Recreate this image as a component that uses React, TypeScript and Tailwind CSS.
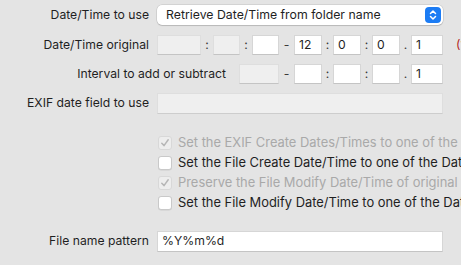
import React from "react";

const font = { fontFamily: "Inter, 'Noto Sans', sans-serif" };

function Box({ w, value, disabled }: { w: string; value?: string; disabled?: boolean }) {
  return (
    <div
      className={`${w} h-[20px] shrink-0 flex items-center px-[4px] text-[12.2px] text-[#1f1f1f] border border-[#d6d6d6] border-b-[#c4c4c4] ${
        disabled ? "bg-[#efefef] border-[#dedede]" : "bg-white"
      }`}
    >
      {value}
    </div>
  );
}

function Sep({ ch }: { ch: string }) {
  return <span className="w-[11px] shrink-0 text-center text-[12.2px] text-[#3a3a3a]">{ch}</span>;
}

function Label({ children, w = "w-[149px]" }: { children: React.ReactNode; w?: string }) {
  return (
    <div className={`${w} shrink-0 text-right text-[12.2px] text-[#1f1f1f] whitespace-nowrap`}>
      {children}
    </div>
  );
}

function Check({ checked, disabled, text }: { checked?: boolean; disabled?: boolean; text: string }) {
  return (
    <div className="h-[20px] flex items-center gap-[6px] pl-[158px] whitespace-nowrap">
      <div
        className={`w-[14px] h-[14px] shrink-0 rounded-[3px] flex items-center justify-center ${
          disabled ? "bg-[#ededed] border border-[#d8d8d8]" : "bg-white border border-[#c9c9c9] shadow-[0_0.5px_0.5px_rgba(0,0,0,0.1)]"
        }`}
      >
        {checked && (
          <svg width="10" height="10" viewBox="0 0 10 10">
            <path d="M1.8 5.2 L4 7.6 L8.2 1.8" fill="none" stroke="#b5b5b5" strokeWidth="1.5" strokeLinecap="round" strokeLinejoin="round" />
          </svg>
        )}
      </div>
      <span className={`text-[12.9px] ${disabled ? "text-[#a9a9a9]" : "text-[#1f1f1f]"}`}>{text}</span>
    </div>
  );
}

export default function App() {
  return (
    <div className="w-[461px] h-[265px] overflow-hidden bg-[#e4e4e4]" style={font}>
      {/* Date/Time to use */}
      <div className="flex items-center gap-[8px] pt-[5px] h-[25px]">
        <Label>Date/Time to use</Label>
        <div className="w-[286px] h-[20px] shrink-0 bg-white rounded-[5px] shadow-[0_0_0_0.5px_rgba(0,0,0,0.15),0_1px_1px_rgba(0,0,0,0.12)] flex items-center justify-between pl-[9px] pr-[2px]">
          <span className="text-[12.3px] text-[#1f1f1f]">Retrieve Date/Time from folder name</span>
          <div className="w-[16px] h-[16px] rounded-[4px] bg-[#1c7cf4] flex items-center justify-center">
            <svg width="10" height="12" viewBox="0 0 10 12">
              <path d="M2.5 4.5 L5 2 L7.5 4.5 M2.5 7.5 L5 10 L7.5 7.5" fill="none" stroke="white" strokeWidth="1.5" strokeLinecap="round" strokeLinejoin="round" />
            </svg>
          </div>
        </div>
      </div>

      {/* Date/Time original */}
      <div className="flex items-center mt-[10px] h-[20px]">
        <Label>Date/Time original</Label>
        <div className="flex items-center ml-[8px]">
          <Box w="w-[44px]" disabled />
          <span className="w-[12px] shrink-0 text-center text-[12.2px] text-[#3a3a3a]">:</span>
          <Box w="w-[27px]" disabled />
          <span className="w-[12px] shrink-0 text-center text-[12.2px] text-[#3a3a3a]">:</span>
          <Box w="w-[27px]" />
          <span className="w-[15px] shrink-0 text-center text-[12.2px] text-[#3a3a3a]">-</span>
          <Box w="w-[28px]" value="12" />
          <Sep ch=":" />
          <Box w="w-[28px]" value="0" />
          <Sep ch=":" />
          <Box w="w-[28px]" value="0" />
          <Sep ch="." />
          <Box w="w-[32px]" value="1" />
          <span className="ml-[13px] text-[12.2px] text-[#b3261e] whitespace-nowrap">(?)</span>
        </div>
      </div>

      {/* Interval */}
      <div className="flex items-center mt-[9px] h-[20px]">
        <Label w="w-[226px]">Interval to add or subtract</Label>
        <div className="flex items-center ml-[13px]">
          <Box w="w-[40px]" disabled />
          <span className="w-[15px] shrink-0 text-center text-[12.2px] text-[#3a3a3a]">-</span>
          <Box w="w-[28px]" />
          <Sep ch=":" />
          <Box w="w-[28px]" />
          <Sep ch=":" />
          <Box w="w-[28px]" />
          <Sep ch="." />
          <Box w="w-[32px]" value="1" />
        </div>
      </div>

      {/* EXIF field */}
      <div className="flex items-center gap-[8px] mt-[9px] h-[21px]">
        <Label>EXIF date field to use</Label>
        <div className="w-[286px] h-[21px] shrink-0 bg-[#efefef] border border-[#dedede] border-b-[#cdcdcd]" />
      </div>

      {/* Options */}
      <div className="mt-[19px] flex flex-col">
        <Check checked disabled text="Set the EXIF Create Dates/Times to one of the Date/Time original values" />
        <Check text="Set the File Create Date/Time to one of the Date/Time original values" />
        <Check checked disabled text="Preserve the File Modify Date/Time of original files" />
        <Check text="Set the File Modify Date/Time to one of the Date/Time original values" />
      </div>

      {/* File name pattern */}
      <div className="flex items-center gap-[8px] mt-[18px] h-[21px]">
        <Label>File name pattern</Label>
        <div className="w-[286px] h-[21px] shrink-0 bg-white border border-[#d6d6d6] border-b-[#c4c4c4] flex items-center px-[4px] text-[12.2px] text-[#1f1f1f]">
          %Y%m%d
        </div>
      </div>
    </div>
  );
}
